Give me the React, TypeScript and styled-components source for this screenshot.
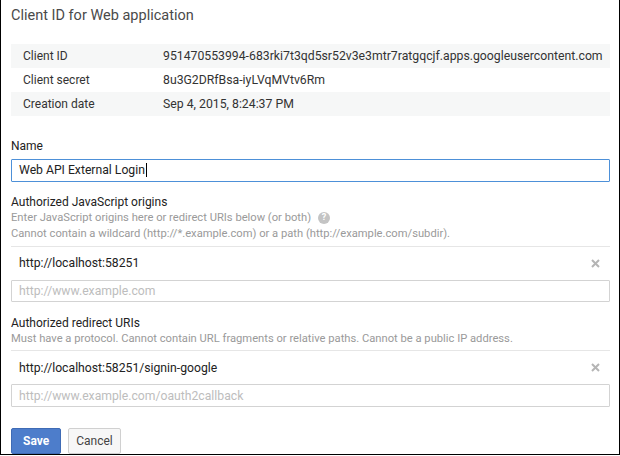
import React from 'react';
import styled, { createGlobalStyle } from 'styled-components';

const GlobalStyle = createGlobalStyle`
    html, body {
        margin: 0;
        padding: 0;
        background: #ffffff;
    }
    body {
        font-family: Roboto, "Liberation Sans", Arial, sans-serif;
        color: #222222;
    }
    * {
        box-sizing: border-box;
    }
`;

const Frame = styled.div`
    width: 620px;
    height: 455px;
    border: 1px solid #000000;
    border-top: none;
    padding: 0 9px 0 10px;
    display: flex;
    flex-direction: column;
`;

const Title = styled.h1`
    margin: 6px 0 0;
    font-size: 14.5px;
    line-height: 20px;
    font-weight: 400;
    color: #4a4a4a;
`;

const InfoTable = styled.div`
    margin-top: 18px;
    display: flex;
    flex-direction: column;
`;

const InfoRow = styled.div<{ $shaded?: boolean }>`
    display: flex;
    align-items: center;
    height: 24px;
    padding-left: 12px;
    background: ${(p) => (p.$shaded ? '#f6f7f7' : 'transparent')};
    font-size: 12px;
    color: #333333;
`;

const InfoLabel = styled.span`
    width: 140px;
    flex-shrink: 0;
`;

const InfoValue = styled.span`
    font-size: 12.25px;
    white-space: nowrap;
`;

const FieldLabel = styled.div<{ $top: number }>`
    margin-top: ${(p) => p.$top}px;
    font-size: 12px;
    line-height: 16px;
    color: #222222;
`;

const HelpText = styled.div`
    font-size: 11.2px;
    line-height: 16px;
    color: #9a9a9a;
    display: flex;
    align-items: center;
    white-space: nowrap;
`;

const HelpIcon = styled.span`
    display: inline-flex;
    align-items: center;
    justify-content: center;
    width: 12px;
    height: 12px;
    margin-left: 7px;
    border-radius: 50%;
    background: #c4c4c4;
    color: #ffffff;
    font-size: 9px;
    font-weight: 700;
    line-height: 1;
`;

const TextBox = styled.div<{ $focused?: boolean }>`
    height: 23px;
    border: 1px solid ${(p) => (p.$focused ? '#4d90d8' : '#d3d3d3')};
    border-radius: 1px;
    padding: 0 7px;
    display: flex;
    align-items: center;
    font-size: 12.2px;
    color: #222222;
    margin-top: 5px;
`;

const Caret = styled.span`
    display: inline-block;
    width: 1px;
    height: 14px;
    margin-left: 1px;
    background: #000000;
`;

const UrlInput = styled.input`
    display: block;
    width: 100%;
    height: 23px;
    border: 1px solid #d3d3d3;
    border-radius: 1px;
    padding: 0 7px;
    font-family: inherit;
    font-size: 12.2px;
    color: #222222;
    outline: none;

    &::placeholder {
        color: #bdbdbd;
    }
`;

const Separator = styled.div<{ $top: number }>`
    margin-top: ${(p) => p.$top}px;
    height: 1px;
    background: #e6e6e6;
`;

const UrlRow = styled.div`
    height: 33px;
    display: flex;
    align-items: center;
    justify-content: space-between;
    padding: 0 10px 0 8px;
    font-size: 12.2px;
    color: #222222;
`;

const RemoveIcon = styled.svg`
    width: 9px;
    height: 9px;
    display: block;
`;

const ButtonBar = styled.div`
    margin-top: 21px;
    display: flex;
    gap: 7px;
`;

const Button = styled.button<{ $primary?: boolean }>`
    height: 26px;
    padding: 0 ${(p) => (p.$primary ? 11 : 7)}px;
    border-radius: 2px;
    font-family: inherit;
    font-size: 12px;
    font-weight: ${(p) => (p.$primary ? 700 : 400)};
    color: ${(p) => (p.$primary ? '#ffffff' : '#444444')};
    background: ${(p) => (p.$primary ? '#4d7dcb' : '#f7f7f7')};
    border: 1px solid ${(p) => (p.$primary ? '#3f6bb5' : '#d0d0d0')};
`;

const Remove = () => (
    <RemoveIcon viewBox="0 0 9 9">
        <path d="M1 1 L8 8 M8 1 L1 8" stroke="#b5b5b5" strokeWidth="2" />
    </RemoveIcon>
);

const App: React.FC = () => {
    return (
        <>
            <GlobalStyle />
            <Frame>
                <Title>Client ID for Web application</Title>

                <InfoTable>
                    <InfoRow $shaded>
                        <InfoLabel>Client ID</InfoLabel>
                        <InfoValue>951470553994-683rki7t3qd5sr52v3e3mtr7ratgqcjf.apps.googleusercontent.com</InfoValue>
                    </InfoRow>
                    <InfoRow>
                        <InfoLabel>Client secret</InfoLabel>
                        <InfoValue>8u3G2DRfBsa-iyLVqMVtv6Rm</InfoValue>
                    </InfoRow>
                    <InfoRow $shaded>
                        <InfoLabel>Creation date</InfoLabel>
                        <InfoValue>Sep 4, 2015, 8:24:37 PM</InfoValue>
                    </InfoRow>
                </InfoTable>

                {/* Name */}
                <FieldLabel $top={22}>Name</FieldLabel>
                <TextBox $focused>
                    Web API External Login
                    <Caret />
                </TextBox>

                {/* JavaScript origins */}
                <FieldLabel $top={12}>Authorized JavaScript origins</FieldLabel>
                <HelpText>
                    Enter JavaScript origins here or redirect URIs below (or both)
                    <HelpIcon>?</HelpIcon>
                </HelpText>
                <HelpText>Cannot contain a wildcard (http://*.example.com) or a path (http://example.com/subdir).</HelpText>
                <Separator $top={4} />
                <UrlRow>
                    http://localhost:58251
                    <Remove />
                </UrlRow>
                <UrlInput placeholder="http://www.example.com" />

                {/* Redirect URIs */}
                <FieldLabel $top={13}>Authorized redirect URIs</FieldLabel>
                <HelpText>Must have a protocol. Cannot contain URL fragments or relative paths. Cannot be a public IP address.</HelpText>
                <Separator $top={3} />
                <UrlRow>
                    http://localhost:58251/signin-google
                    <Remove />
                </UrlRow>
                <UrlInput placeholder="http://www.example.com/oauth2callback" />

                <ButtonBar>
                    <Button $primary>Save</Button>
                    <Button>Cancel</Button>
                </ButtonBar>
            </Frame>
        </>
    );
};

export default App;
